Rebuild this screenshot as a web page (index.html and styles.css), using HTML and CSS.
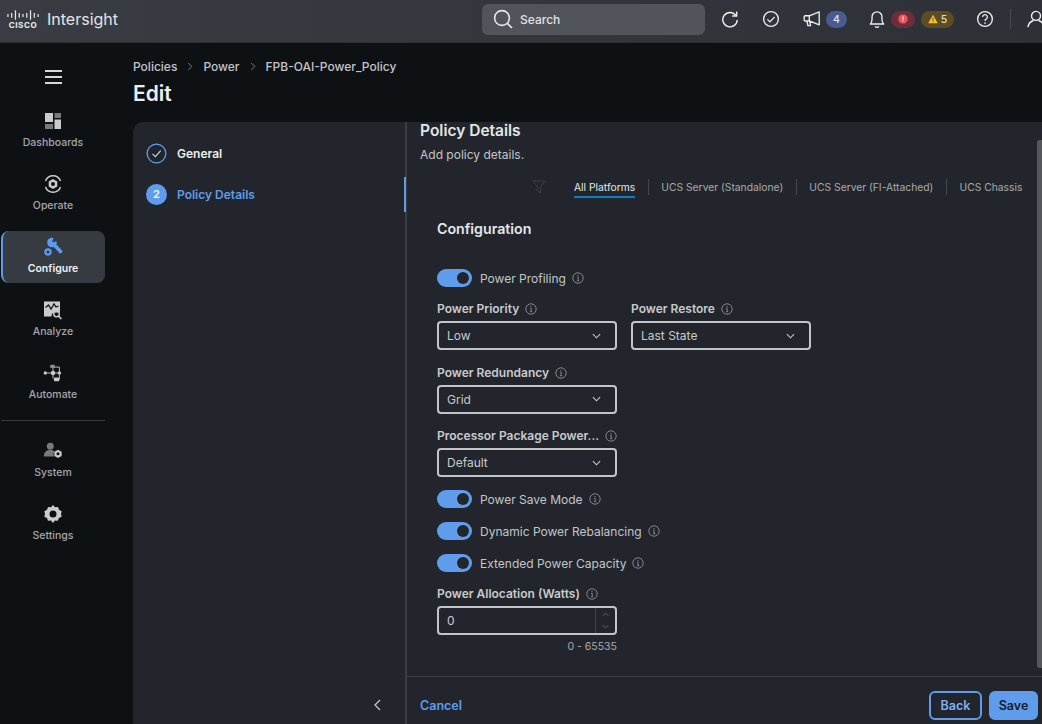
FILE: index.html
```html
<!DOCTYPE html>
<html lang="en">

<head>
  <meta charset="UTF-8">
  <meta name="viewport" content="width=device-width, initial-scale=1.0">
  <title>Intersight - Edit Power Policy</title>
  <link rel="stylesheet" href="styles.css">
</head>

<body>
  <svg class="defs">
    <symbol id="info" viewBox="0 0 12 12">
      <circle cx="6" cy="6" r="5.2" fill="none" stroke="currentColor" stroke-width="0.9" />
      <circle cx="6" cy="3.6" r="0.7" fill="currentColor" />
      <path d="M5.1 5.4H6.2V8.6M5 8.7H7.2" fill="none" stroke="currentColor" stroke-width="0.9" />
    </symbol>
    <symbol id="chev" viewBox="0 0 10 6">
      <path d="M1 1l4 4 4-4" fill="none" stroke="currentColor" stroke-width="1.2" />
    </symbol>
  </svg>

  <header class="topbar">
    <div class="brand">
      <div class="cisco">
        <svg class="cisco-bars" viewBox="0 0 34 10">
          <path d="M1 4v3M5 3v5M9 0v10M13 3v5M17 4v3M21 3v5M25 0v10M29 3v5M33 4v3" stroke="#e4e6e8" stroke-width="1.3" fill="none" />
        </svg>
        <span class="cisco-word">CISCO</span>
      </div>
      <span class="product">Intersight</span>
    </div>
    <div class="search">
      <svg class="search-icon" viewBox="0 0 20 20">
        <circle cx="9" cy="9" r="7.4" fill="none" stroke="#e6e8ea" stroke-width="1.6" />
        <path d="M14.4 14.4L19 19" stroke="#e6e8ea" stroke-width="1.6" fill="none" />
      </svg>
      <span>Search</span>
    </div>
    <div class="tools">
      <svg class="tool tool-refresh" viewBox="0 0 20 20">
        <path d="M16.6 6.2A8 8 0 1 0 18 11" fill="none" stroke="#eceeef" stroke-width="1.6" />
        <path d="M17.4 1.6V6.6H12.4" fill="none" stroke="#eceeef" stroke-width="1.6" />
      </svg>
      <svg class="tool tool-check" viewBox="0 0 20 20">
        <circle cx="10" cy="10" r="8.2" fill="none" stroke="#eceeef" stroke-width="1.5" />
        <path d="M6 10.4l2.8 2.8L14 7.6" fill="none" stroke="#eceeef" stroke-width="1.5" />
      </svg>
      <svg class="tool tool-mega" viewBox="0 0 20 20">
        <path d="M18 2L7 6.4H2.5a1.2 1.2 0 0 0-1.2 1.2v3.4a1.2 1.2 0 0 0 1.2 1.2H7L18 16.5zM7 6.4v6M4.4 12.4l1 5h3l-1-5" fill="none" stroke="#eceeef" stroke-width="1.5" stroke-linejoin="round" />
      </svg>
      <span class="badge badge-blue">4</span>
      <svg class="tool tool-bell" viewBox="0 0 20 20">
        <path d="M2.500 15.500c1.600-1.200 2-2.800 2-5.500V7.500a5.500 5.500 0 0 1 11 0V10c0 2.700.4 4.300 2 5.500zM8 18a2.200 2.200 0 0 0 4 0" fill="none" stroke="#eceeef" stroke-width="1.5" stroke-linejoin="round" />
      </svg>
      <span class="badge badge-red">
        <svg class="badge-icon" viewBox="0 0 10 10">
          <path d="M3 .5h4L9.500 3v4L7 9.500H3L.5 7V3z" fill="#f0525f" />
          <path d="M5 2.400v3M5 6.600v1" stroke="#fff" stroke-width="1.1" />
        </svg>
      </span>
      <span class="badge badge-yellow">
        <svg class="badge-icon" viewBox="0 0 10 10">
          <path d="M5 .8L9.800 9.200H.2z" fill="#f2c230" />
          <path d="M5 3.600v3M5 7.200v1" stroke="#4c4320" stroke-width="0.9" />
        </svg>
        5
      </span>
      <svg class="tool tool-help" viewBox="0 0 20 20">
        <circle cx="10" cy="10" r="8.2" fill="none" stroke="#eceeef" stroke-width="1.5" />
        <path d="M7.400 7.800a2.600 2.600 0 1 1 4 2.200c-1 .6-1.400 1.100-1.400 2.200" fill="none" stroke="#eceeef" stroke-width="1.4" />
        <circle cx="10" cy="14.600" r="0.9" fill="#eceeef" />
      </svg>
      <span class="tool-sep"></span>
      <svg class="tool tool-user" viewBox="0 0 20 20">
        <circle cx="10" cy="6.500" r="5" fill="none" stroke="#eceeef" stroke-width="1.6" />
        <path d="M1 19c.6-4 3.600-6.600 6.200-7.400M19 19c-.6-4-3.600-6.600-6.200-7.400" fill="none" stroke="#eceeef" stroke-width="1.6" />
      </svg>
    </div>
  </header>

  <div class="layout">
    <nav class="sidebar">
      <div class="hamburger"><span></span><span></span><span></span></div>
      <a class="nav-item">
        <svg class="nav-icon" viewBox="0 0 20 20">
          <rect x="2" y="2" width="8" height="9" fill="#c9cbce" />
          <rect x="11.500" y="2" width="6.500" height="5" fill="#77797d" />
          <rect x="2" y="13" width="8" height="5" fill="#77797d" />
          <rect x="11.500" y="8.500" width="6.500" height="9.500" fill="#c9cbce" />
        </svg>
        <span>Dashboards</span>
      </a>
      <a class="nav-item">
        <svg class="nav-icon" viewBox="0 0 20 20">
          <path d="M2.500 7a8 8 0 0 1 15 0M17.500 13a8 8 0 0 1-15 0" fill="none" stroke="#c9cbce" stroke-width="1.5" />
          <path d="M10 5l4.300 2.500v5L10 15l-4.300-2.500v-5z" fill="#c9cbce" />
          <circle cx="10" cy="10" r="2" fill="#0e1114" />
        </svg>
        <span>Operate</span>
      </a>
      <a class="nav-item active">
        <svg class="nav-icon" viewBox="0 0 20 20">
          <path d="M9.500 6l8 8.500" stroke="#5c9cf0" stroke-width="3.600" stroke-linecap="round" fill="none" />
          <circle cx="9" cy="5.500" r="4.800" fill="#5c9cf0" />
          <path d="M9 5l2-5h5l-2 4.500z" fill="#363a41" />
          <circle cx="5" cy="15" r="2.600" fill="none" stroke="#5c9cf0" stroke-width="2.200" />
        </svg>
        <span>Configure</span>
      </a>
      <a class="nav-item">
        <svg class="nav-icon" viewBox="0 0 20 20">
          <path d="M1 1.500h16v11h-6.500a4 4 0 0 0-2 4H1z" fill="#c9cbce" />
          <path d="M2.500 7.500l3-2.500 2.500 4 3-5 2 3 2.500-1" fill="none" stroke="#0e1114" stroke-width="1.3" />
          <circle cx="13.500" cy="14" r="2.800" fill="none" stroke="#c9cbce" stroke-width="1.4" />
          <path d="M15.500 16l3 3" stroke="#c9cbce" stroke-width="1.6" />
        </svg>
        <span>Analyze</span>
      </a>
      <a class="nav-item">
        <svg class="nav-icon" viewBox="0 0 22 20">
          <path d="M2 10h18M11 3.500H18V16.500H13M11 3.500V16" fill="none" stroke="#c9cbce" stroke-width="1" />
          <circle cx="2.500" cy="10" r="1.800" fill="#c9cbce" />
          <circle cx="11" cy="10" r="2.400" fill="#c9cbce" />
          <circle cx="18" cy="10" r="1.800" fill="#c9cbce" />
          <rect x="8" y="1" width="5" height="3.500" rx="0.5" fill="#8a8c90" />
          <rect x="12" y="15" width="6" height="4" rx="1" fill="#c9cbce" />
        </svg>
        <span>Automate</span>
      </a>
      <div class="nav-divider"></div>
      <a class="nav-item">
        <svg class="nav-icon" viewBox="0 0 22 20">
          <circle cx="8" cy="4.800" r="3.800" fill="#77797d" />
          <path d="M1 16c0-5 3-7 7-7 2 0 3.500.5 4.600 1.500a5.500 5.500 0 0 0-.6 5.500z" fill="#77797d" />
          <path d="M16.500 8.500l4 2.300v4.600l-4 2.300-4-2.300v-4.600z" fill="#c9cbce" />
          <circle cx="16.500" cy="13" r="1.700" fill="#0e1114" />
        </svg>
        <span>System</span>
      </a>
      <a class="nav-item">
        <svg class="nav-icon" viewBox="0 0 20 20">
          <path d="M10 1l2 2.300 3-.3 1 2.800 2.700 1.400-.7 2.800.7 2.800L15.900 14l-1 2.800-3-.3L10 19l-2-2.500-3 .3-1-2.800-2.700-1.200.7-2.800-.7-2.800L4 5.800 5 3l3 .3z" fill="#c9cbce" />
          <circle cx="10" cy="10" r="3.500" fill="#0e1114" />
        </svg>
        <span>Settings</span>
      </a>
    </nav>

    <main class="main">
      <div class="crumbs">
        <span>Policies</span>
        <svg class="crumb-sep" viewBox="0 0 6 10"><path d="M1 1l4 4-4 4" fill="none" stroke="currentColor" stroke-width="1" /></svg>
        <span>Power</span>
        <svg class="crumb-sep" viewBox="0 0 6 10"><path d="M1 1l4 4-4 4" fill="none" stroke="currentColor" stroke-width="1" /></svg>
        <span>FPB-OAI-Power_Policy</span>
      </div>
      <h1 class="page-title">Edit</h1>

      <section class="wizard">
        <aside class="steps">
          <div class="step-list">
            <div class="step">
              <svg class="step-done" viewBox="0 0 22 22">
                <circle cx="11" cy="11" r="9.800" fill="none" stroke="#5f9cec" stroke-width="1.4" />
                <path d="M6.800 11.300l3 3 5.600-6.200" fill="none" stroke="#c6d6ea" stroke-width="1.2" />
              </svg>
              <span class="step-name">General</span>
            </div>
            <div class="step step-current">
              <span class="step-num">2</span>
              <span class="step-name">Policy Details</span>
            </div>
          </div>
          <div class="collapse">
            <svg viewBox="0 0 7 12"><path d="M6 1L1 6l5 5" fill="none" stroke="currentColor" stroke-width="1.3" /></svg>
          </div>
        </aside>

        <div class="pane">
          <div class="pane-body">
            <h2 class="pane-title">Policy Details</h2>
            <p class="pane-sub">Add policy details.</p>

            <div class="tabs-row">
              <svg class="filter-icon" viewBox="0 0 14 14"><path d="M1 1h12L8.500 7v6L5.500 11V7z" fill="none" stroke="currentColor" stroke-width="0.8" /></svg>
              <div class="tabs">
                <span class="tab tab-on">All Platforms</span>
                <span class="tab">UCS Server (Standalone)</span>
                <span class="tab">UCS Server (FI-Attached)</span>
                <span class="tab">UCS Chassis</span>
              </div>
            </div>

            <div class="form">
              <h3 class="form-title">Configuration</h3>

              <div class="toggle-row first">
                <span class="toggle"></span>
                <span class="toggle-label">Power Profiling</span>
                <svg class="info"><use href="#info" /></svg>
              </div>

              <div class="field-pair">
                <div class="field">
                  <label class="field-label">Power Priority<svg class="info"><use href="#info" /></svg></label>
                  <div class="select"><span>Low</span><svg class="chev"><use href="#chev" /></svg></div>
                </div>
                <div class="field">
                  <label class="field-label">Power Restore<svg class="info"><use href="#info" /></svg></label>
                  <div class="select"><span>Last State</span><svg class="chev"><use href="#chev" /></svg></div>
                </div>
              </div>

              <div class="field">
                <label class="field-label">Power Redundancy<svg class="info"><use href="#info" /></svg></label>
                <div class="select"><span>Grid</span><svg class="chev"><use href="#chev" /></svg></div>
              </div>

              <div class="field">
                <label class="field-label">Processor Package Power...<svg class="info"><use href="#info" /></svg></label>
                <div class="select"><span>Default</span><svg class="chev"><use href="#chev" /></svg></div>
              </div>

              <div class="toggle-row">
                <span class="toggle"></span>
                <span class="toggle-label">Power Save Mode</span>
                <svg class="info"><use href="#info" /></svg>
              </div>
              <div class="toggle-row">
                <span class="toggle"></span>
                <span class="toggle-label">Dynamic Power Rebalancing</span>
                <svg class="info"><use href="#info" /></svg>
              </div>
              <div class="toggle-row">
                <span class="toggle"></span>
                <span class="toggle-label">Extended Power Capacity</span>
                <svg class="info"><use href="#info" /></svg>
              </div>

              <div class="field field-watts">
                <label class="field-label">Power Allocation (Watts)<svg class="info"><use href="#info" /></svg></label>
                <div class="select number">
                  <span>0</span>
                  <div class="spinner">
                    <svg class="spin-up"><use href="#chev" /></svg>
                    <svg class="spin-down"><use href="#chev" /></svg>
                  </div>
                </div>
                <div class="range">0 - 65535</div>
              </div>
            </div>
            <div class="scrollbar"></div>
          </div>

          <footer class="pane-foot">
            <a class="cancel">Cancel</a>
            <div class="foot-buttons">
              <button class="btn btn-back">Back</button>
              <button class="btn btn-save">Save</button>
            </div>
          </footer>
        </div>
      </section>
    </main>
  </div>
</body>

</html>
```

FILE: styles.css
```css
* {
  box-sizing: border-box;
}

html,
body {
  margin: 0;
  height: 100%;
}

body {
  width: 1042px;
  height: 724px;
  overflow: hidden;
  background: #0e1114;
  color: #d6d8da;
  font-family: Inter, "Noto Sans", sans-serif;
  display: flex;
  flex-direction: column;
}

.defs {
  display: none;
}

/* top bar */
.topbar {
  height: 43px;
  flex: none;
  display: flex;
  align-items: center;
  padding-bottom: 4px;
  background: linear-gradient(90deg, #393d43, #2d3137);
  border-bottom: 1px solid #2b2e33;
}

.brand {
  width: 482px;
  flex: none;
  display: flex;
  align-items: center;
  padding-left: 6px;
}

.cisco {
  width: 34px;
  display: flex;
  flex-direction: column;
  align-items: center;
}

.cisco-bars {
  width: 32px;
  height: 10px;
}

.cisco-word {
  font-size: 8px;
  font-weight: 700;
  line-height: 8px;
  letter-spacing: 0.6px;
  color: #eceeef;
  margin-top: 1px;
}

.product {
  margin-left: 7px;
  font-size: 16px;
  color: #e2e4e6;
}

.search {
  width: 223px;
  height: 31px;
  flex: none;
  border-radius: 6px;
  background: #51555b;
  display: flex;
  align-items: center;
  padding-left: 11px;
  gap: 7px;
  font-size: 12px;
  font-weight: 500;
  color: #dfe1e3;
}

.search-icon {
  width: 20px;
  height: 20px;
}

.tools {
  display: flex;
  flex: none;
  align-items: center;
  margin-left: 16px;
}

.tool {
  width: 18px;
  height: 18px;
  flex: none;
}

.tool-check {
  margin-left: 23px;
}

.tool-mega {
  margin-left: 23px;
}

.tool-bell {
  margin-left: 21px;
}

.tool-help {
  margin-left: 22px;
}

.tool-user {
  margin-left: 16px;
}

.tool-sep {
  width: 1px;
  height: 20px;
  background: #484c52;
  margin-left: 16px;
}

.badge {
  height: 17px;
  border-radius: 9px;
  display: inline-flex;
  align-items: center;
  justify-content: center;
  font-size: 10.5px;
  font-weight: 500;
  flex: none;
}

.badge-icon {
  width: 10px;
  height: 10px;
}

.badge-blue {
  width: 21px;
  margin-left: 5px;
  background: #4a5b8f;
  color: #dfe5f5;
}

.badge-red {
  width: 24px;
  margin-left: 5px;
  background: #6a2f3a;
}

.badge-yellow {
  width: 33px;
  margin-left: 6px;
  gap: 3px;
  background: #5b4c24;
  color: #e7dcb5;
}

.layout {
  flex: 1;
  display: flex;
  min-height: 0;
}

/* left nav */
.sidebar {
  width: 133px;
  flex: none;
  padding: 25px 0 0 1px;
}

.hamburger {
  width: 104px;
  height: 18px;
  display: flex;
  flex-direction: column;
  align-items: center;
  justify-content: center;
  gap: 4px;
  margin-bottom: 19px;
}

.hamburger span {
  width: 17px;
  height: 2px;
  background: #d6d8da;
}

.nav-item {
  width: 104px;
  height: 52px;
  margin-bottom: 11px;
  padding-bottom: 2px;
  display: flex;
  flex-direction: column;
  align-items: center;
  justify-content: center;
  gap: 5px;
  font-size: 10.5px;
  font-weight: 500;
  color: #a4a7ab;
  border-radius: 8px;
}

.nav-icon {
  width: 20px;
  height: 20px;
}

.nav-item.active {
  background: #363a41;
  border-left: 2px solid #5c9cf0;
  padding-right: 2px;
  color: #f0f1f2;
  font-weight: 600;
}

.nav-divider {
  width: 104px;
  height: 1px;
  background: #35383d;
  margin: 0 0 14px;
}

/* main */
.main {
  flex: 1;
  min-width: 0;
  display: flex;
  flex-direction: column;
}

.crumbs {
  margin-top: 15px;
  height: 16px;
  display: flex;
  align-items: center;
  font-size: 12px;
  font-weight: 500;
  color: #c3c5c8;
}

.crumb-sep {
  width: 6px;
  height: 9px;
  margin: 0 10px;
  color: #85888c;
}

.page-title {
  margin: 5px 0 0;
  height: 43px;
  font-size: 21px;
  font-weight: 600;
  line-height: 29px;
  color: #eceeef;
}

.wizard {
  flex: 1;
  min-height: 0;
  display: flex;
  background: #22262c;
  border-radius: 10px 0 0 0;
}

.steps {
  width: 272px;
  flex: none;
  display: flex;
  flex-direction: column;
  position: relative;
}

/* blue marker sits over the divider */
.steps::after {
  content: "";
  position: absolute;
  right: -1px;
  top: 55px;
  width: 2px;
  height: 35px;
  background: #5f9cec;
}

.step-list {
  flex: 1;
  padding: 20px 0 0 13px;
}

.step {
  height: 22px;
  display: flex;
  align-items: center;
  gap: 10px;
  margin-bottom: 19px;
  font-size: 12px;
  font-weight: 600;
  color: #eceeef;
}

.step-done {
  width: 21px;
  height: 21px;
}

.step-num {
  width: 21px;
  height: 21px;
  border-radius: 50%;
  background: #5f9cec;
  color: #e9f1fc;
  display: flex;
  align-items: center;
  justify-content: center;
  font-size: 11px;
  font-weight: 700;
}

.step-current .step-name {
  color: #5f9cec;
}

.collapse {
  height: 48px;
  display: flex;
  align-items: center;
  justify-content: flex-end;
  padding: 10px 24px 0 0;
  color: #c3c5c8;
}

.collapse svg {
  width: 7px;
  height: 12px;
}

.pane {
  flex: 1;
  min-width: 0;
  display: flex;
  flex-direction: column;
  border-left: 2px solid #3a3e44;
}

.pane-body {
  flex: 1;
  min-height: 0;
  position: relative;
  padding: 0 0 0 13px;
}

.pane-title {
  margin: 0;
  font-size: 15.5px;
  font-weight: 600;
  line-height: 18px;
  color: #e4e6e8;
}

.pane-sub {
  margin: 7px 0 0;
  font-size: 12px;
  line-height: 16px;
  color: #c3c5c8;
}

.tabs-row {
  display: flex;
  align-items: center;
  margin-top: 14px;
  padding-left: 112px;
  height: 20px;
}

.filter-icon {
  width: 14px;
  height: 14px;
  flex: none;
  color: #3f444a;
  margin-right: 28px;
}

.tabs {
  display: flex;
  align-items: center;
  white-space: nowrap;
}

.tab {
  font-size: 10.3px;
  line-height: 16px;
  color: #a8abae;
  padding: 0 12.6px;
  border-left: 1px solid #45494f;
  position: relative;
}

.tab-on {
  color: #e4e6e8;
  padding-left: 0;
  border-left: 0;
}

/* underline hangs below the active tab */
.tab-on::after {
  content: "";
  position: absolute;
  left: 0;
  right: 12.6px;
  bottom: -3px;
  height: 2px;
  background: #0d7fc0;
}

.form {
  padding: 22px 0 0 17px;
}

.form-title {
  margin: 0 0 30px;
  font-size: 14.2px;
  font-weight: 600;
  line-height: 20px;
  color: #e4e6e8;
}

.toggle-row {
  height: 18px;
  display: flex;
  align-items: center;
  margin-bottom: 14px;
}

.field + .toggle-row {
  margin-top: -1.5px;
}

.toggle {
  width: 35px;
  height: 18px;
  border-radius: 9px;
  background: #5f9cec;
  position: relative;
  margin-right: 8px;
}

.toggle::after {
  content: "";
  position: absolute;
  right: 3px;
  top: 3px;
  width: 12px;
  height: 12px;
  border-radius: 50%;
  background: #22262c;
}

.toggle-label {
  font-size: 12px;
  color: #c3c5c8;
}

.info {
  width: 12px;
  height: 12px;
  margin-left: 6px;
  color: #8d9094;
  vertical-align: -2px;
  flex: none;
}

.field-pair {
  display: flex;
  gap: 14px;
}

.field {
  margin-bottom: 14.5px;
}

.field-label {
  display: block;
  font-size: 12px;
  font-weight: 600;
  line-height: 15px;
  color: #c8cacd;
  margin-bottom: 5px;
}

.select {
  width: 180px;
  height: 29px;
  border: 2px solid #c2c5c8;
  border-radius: 4px;
  display: flex;
  align-items: center;
  justify-content: space-between;
  padding: 0 14px 0 8px;
  font-size: 12px;
  color: #c8cacd;
}

.chev {
  width: 9px;
  height: 6px;
  color: #c8cacd;
}

.field-watts {
  margin-top: 1.5px;
}

.number {
  padding-right: 0;
}

.spinner {
  width: 20px;
  height: 100%;
  border-left: 1px solid #3f4349;
  display: flex;
  flex-direction: column;
  align-items: center;
  justify-content: space-around;
}

.spin-up {
  width: 7px;
  height: 5px;
  color: #6e7176;
  transform: scaleY(-1);
}

.spin-down {
  width: 7px;
  height: 5px;
  color: #6e7176;
}

.range {
  width: 180px;
  text-align: right;
  font-size: 10.5px;
  line-height: 14px;
  margin-top: 5px;
  color: #a8abae;
}

.scrollbar {
  position: absolute;
  right: 0;
  top: 18px;
  bottom: 8px;
  width: 5px;
  background: #54585d;
  border-radius: 3px 0 0 3px;
}

.pane-foot {
  height: 48px;
  flex: none;
  display: flex;
  align-items: center;
  justify-content: space-between;
  border-top: 1px solid #3a3e44;
  padding: 9px 4px 0 13px;
}

.cancel {
  font-size: 12.5px;
  font-weight: 600;
  color: #5f9cec;
}

.foot-buttons {
  display: flex;
  gap: 7px;
}

.btn {
  height: 29px;
  border-radius: 6px;
  font-family: inherit;
  font-size: 12.5px;
  font-weight: 600;
  border: 2px solid #5f9cec;
}

.btn-back {
  width: 53px;
  background: transparent;
  color: #7fb0ef;
}

.btn-save {
  width: 49px;
  background: #5f9cec;
  color: #16202c;
}
```
